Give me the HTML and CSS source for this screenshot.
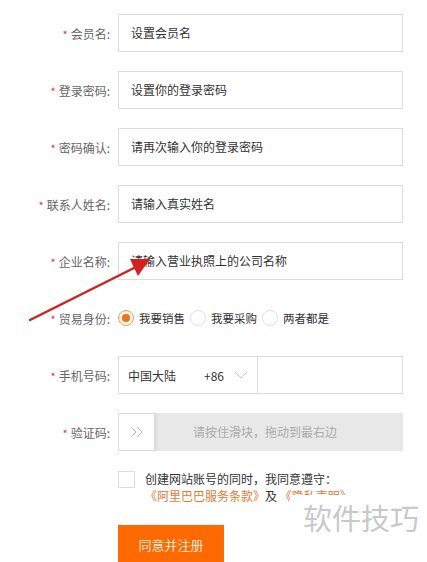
FILE: index.html
```html
<!DOCTYPE html>
<html lang="zh-CN">
  <head>
    <meta charset="UTF-8" />
    <title>注册</title>
    <link rel="stylesheet" href="styles.css">
  </head>
  <body>
    <form class="reg-form">
      <div class="row">
        <label class="label"><span class="req">*</span>会员名:</label>
        <div class="field input">设置会员名</div>
      </div>
      <div class="row">
        <label class="label"><span class="req">*</span>登录密码:</label>
        <div class="field input">设置你的登录密码</div>
      </div>
      <div class="row">
        <label class="label"><span class="req">*</span>密码确认:</label>
        <div class="field input">请再次输入你的登录密码</div>
      </div>
      <div class="row">
        <label class="label"><span class="req">*</span>联系人姓名:</label>
        <div class="field input">请输入真实姓名</div>
      </div>
      <div class="row">
        <label class="label"><span class="req">*</span>企业名称:</label>
        <div class="field input">请输入营业执照上的公司名称</div>
      </div>
      <div class="row">
        <label class="label"><span class="req">*</span>贸易身份:</label>
        <div class="field radios">
          <span class="radio checked"></span><span class="radio-text">我要销售</span>
          <span class="radio"></span><span class="radio-text">我要采购</span>
          <span class="radio"></span><span class="radio-text">两者都是</span>
        </div>
      </div>
      <div class="row">
        <label class="label"><span class="req">*</span>手机号码:</label>
        <div class="field phone">
          <div class="country">
            <span class="country-name">中国大陆</span>
            <span class="code">+86</span>
            <svg class="chevron" width="14" height="8" viewBox="0 0 14 8">
              <path d="M1 1 L7 7 L13 1" fill="none" stroke="#ccc" stroke-width="1" />
            </svg>
          </div>
          <div class="phone-num"></div>
        </div>
      </div>
      <div class="row">
        <label class="label"><span class="req">*</span>验证码:</label>
        <div class="field slider">
          <div class="handle">
            <svg width="14" height="12" viewBox="0 0 14 12">
              <path d="M1 1 L6 6 L1 11 M7 1 L12 6 L7 11" fill="none" stroke="#bbb" stroke-width="1" />
            </svg>
          </div>
          <div class="track">请按住滑块，拖动到最右边</div>
        </div>
      </div>
      <div class="row agree-row">
        <div class="label"></div>
        <div class="agree">
          <span class="checkbox"></span>
          <div class="agree-text">
            <div>创建网站账号的同时，我同意遵守：</div>
            <div><a class="link">《阿里巴巴服务条款》</a>及 <a class="link">《隐私声明》</a></div>
          </div>
        </div>
      </div>
      <div class="row button-row">
        <div class="label"></div>
        <button type="button" class="submit">同意并注册</button>
      </div>
    </form>

    <div class="watermark">软件技巧</div>

    <svg class="arrow" width="427" height="562" viewBox="0 0 427 562">
      <line x1="30" y1="320" x2="138" y2="266" stroke="#d42020" stroke-width="2.5" stroke-linecap="round" />
      <polygon points="150,259 130,259 138,276" fill="#d42020" />
    </svg>
  </body>
</html>
```

FILE: styles.css
```css
body {
  margin: 0;
  background-color: #fff;
  font-family: "Noto Sans CJK SC", "Liberation Sans", sans-serif;
  font-size: 12px;
  color: #333;
  width: 427px;
  height: 562px;
  overflow: hidden;
  position: relative;
}
.reg-form {
  padding-top: 14px;
  display: flex;
  flex-direction: column;
  gap: 19px;
}
.row {
  display: flex;
  align-items: center;
  height: 38px;
}
.label {
  width: 110px;
  margin-right: 8px;
  text-align: right;
  color: #666;
  flex-shrink: 0;
}
.req {
  color: #e4393c;
  font-size: 11px;
  margin-right: 3px;
}
.field {
  width: 285px;
  height: 38px;
  box-sizing: border-box;
}
.input {
  border: 1px solid #ddd;
  padding-left: 12px;
  line-height: 36px;
  color: #333;
}
.radios {
  display: flex;
  align-items: center;
}
.radio {
  width: 14px;
  height: 14px;
  border: 1px solid #e2e2e2;
  border-radius: 50%;
  margin-right: 5px;
  position: relative;
}
.radio.checked {
  border-color: #f0a060;
  background-color: #fff3e6;
}
.radio.checked::after {
  content: "";
  position: absolute;
  left: 3px;
  top: 3px;
  width: 8px;
  height: 8px;
  border-radius: 50%;
  background-color: #e8741a;
}
.radio-text {
  margin-right: 5px;
  color: #333;
  font-size: 11.5px;
}
.phone {
  display: flex;
  border: 1px solid #ddd;
}
.country {
  width: 139px;
  border-right: 1px solid #ddd;
  display: flex;
  align-items: center;
  padding-left: 9px;
  box-sizing: border-box;
}
.country-name {
  width: 76px;
}
.code {
  margin-right: 10px;
}
.phone-num {
  flex: 1;
}
.slider {
  display: flex;
  background-color: #e8e8e8;
}
.handle {
  width: 37px;
  box-sizing: border-box;
  border: 1px solid #ddd;
  background-color: #fff;
  display: flex;
  align-items: center;
  justify-content: center;
  box-shadow: 2px 0 2px rgba(0, 0, 0, 0.06);
}
.track {
  flex: 1;
  padding-left: 38px;
  line-height: 38px;
  color: #aaa;
}
.agree-row {
  align-items: flex-start;
}
.agree {
  display: flex;
  align-items: flex-start;
}
.checkbox {
  width: 15px;
  height: 15px;
  border: 1px solid #ddd;
  margin-top: 1px;
  margin-right: 10px;
  flex-shrink: 0;
}
.agree-text {
  line-height: 17px;
  color: #333;
}
.link {
  color: #e07b36;
  text-decoration: none;
}
.button-row {
  margin-top: -2px;
  align-items: flex-start;
}
.submit {
  width: 106px;
  height: 38px;
  border: none;
  background-color: #ff6a00;
  color: #fde6d6;
  font-family: "Noto Sans CJK SC", sans-serif;
  font-size: 13px;
  padding: 0;
}
.watermark {
  position: absolute;
  left: 290px;
  top: 495px;
  width: 137px;
  height: 40px;
  background-color: #fff;
  color: #c9c9c9;
  font-size: 29px;
  line-height: 36px;
  padding-top: 4px;
  box-sizing: border-box;
  padding-left: 13px;
}
.arrow {
  position: absolute;
  left: 0;
  top: 0;
  pointer-events: none;
}
```
